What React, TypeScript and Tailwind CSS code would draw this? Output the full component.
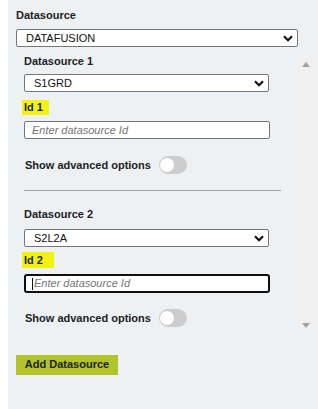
import React from "react";

const font = { fontFamily: '"Liberation Sans", Arial, sans-serif' };

function Chevron() {
  return (
    <svg width="10" height="7" viewBox="0 0 10 7" className="shrink-0">
      <polyline points="1,1.2 5,5.2 9,1.2" fill="none" stroke="#111" strokeWidth="2.2" />
    </svg>
  );
}

function Select({ value, w }: { value: string; w: string }) {
  return (
    <div className={`${w} h-[18px] bg-white border border-[#767676] rounded-[2px] flex items-center justify-between pl-[9px] pr-[4px] text-[11px] text-[#111] leading-none`}>
      <span>{value}</span>
      <Chevron />
    </div>
  );
}

function Toggle() {
  return (
    <div className="w-[28px] h-[18px] rounded-full bg-[#cccccc] relative shrink-0">
      <div className="absolute left-[1px] top-[2px] w-[14px] h-[14px] rounded-full bg-white" />
    </div>
  );
}

function AdvRow({ mt }: { mt: string }) {
  return (
    <div className={`${mt} flex items-center h-[18px] gap-[8px] pl-px`}>
      <span className="text-[11px] font-bold text-[#222] leading-none">Show advanced options</span>
      <Toggle />
    </div>
  );
}

export default function App() {
  return (
    <div className="w-[318px] h-[409px] bg-white flex overflow-hidden" style={font}>
      <div className="ml-2 flex-1 bg-[#eef1f4] pl-2 pr-[4px] pt-[9px] flex flex-col">
        <div className="text-[11px] font-bold leading-[13px] text-[#222]">Datasource</div>
        <div className="mt-[7px]">
          <Select value="DATAFUSION" w="w-[282px]" />
        </div>
        <div className="mt-[8px] h-[280px] flex overflow-hidden">
          <div className="flex-1 pl-2 flex flex-col">
            <div className="text-[11px] font-bold leading-[13px] text-[#222]">Datasource 1</div>
            <div className="mt-[6px]">
              <Select value="S1GRD" w="w-[245px]" />
            </div>
            <div className="mt-[8px] -ml-[2px] w-[27px] h-[15px] bg-[#f2f20c] pl-[2px] text-[11px] font-bold leading-[15px] text-[#222]">
              Id 1
            </div>
            <div className="mt-[6px] w-[246px] h-[18px] bg-white border border-[#767676] rounded-[2px] pl-[7px] flex items-center text-[11px] italic text-[#757575] leading-none">
              Enter datasource Id
            </div>
            <AdvRow mt="mt-[17px]" />
            <div className="mt-[16px] w-[257px] h-px bg-[#a0a0a0]" />
            <div className="mt-[17px] text-[11px] font-bold leading-[13px] text-[#222]">Datasource 2</div>
            <div className="mt-[8px]">
              <Select value="S2L2A" w="w-[245px]" />
            </div>
            <div className="mt-[5px] -ml-[2px] w-[32px] h-[16px] bg-[#f2f20c] pl-[2px] text-[11px] font-bold leading-[16px] text-[#222]">
              Id 2
            </div>
            <div className="mt-[6px] w-[246px] h-[19px] bg-white border-2 border-[#101010] rounded-[3px] pl-[7px] flex items-center text-[11px] italic text-[#757575] leading-none">
              <span className="w-px h-[12px] bg-[#111] -ml-px mr-px" />
              Enter datasource Id
            </div>
            <AdvRow mt="mt-[16px]" />
          </div>
          <div className="w-[17px] bg-[#f1f0f0] flex flex-col items-center justify-between py-[7px]">
            <div className="w-0 h-0 border-l-[4px] border-r-[4px] border-b-[5px] border-l-transparent border-r-transparent border-b-[#a3a3a3]" />
            <div className="w-0 h-0 border-l-[4px] border-r-[4px] border-t-[5px] border-l-transparent border-r-transparent border-t-[#a3a3a3]" />
          </div>
        </div>
        <div className="mt-[16px]">
          <div className="inline-flex items-center justify-center w-[102px] h-[20px] bg-[#b3c32a] text-[11px] font-bold text-[#222] leading-none">
            Add Datasource
          </div>
        </div>
      </div>
    </div>
  );
}
